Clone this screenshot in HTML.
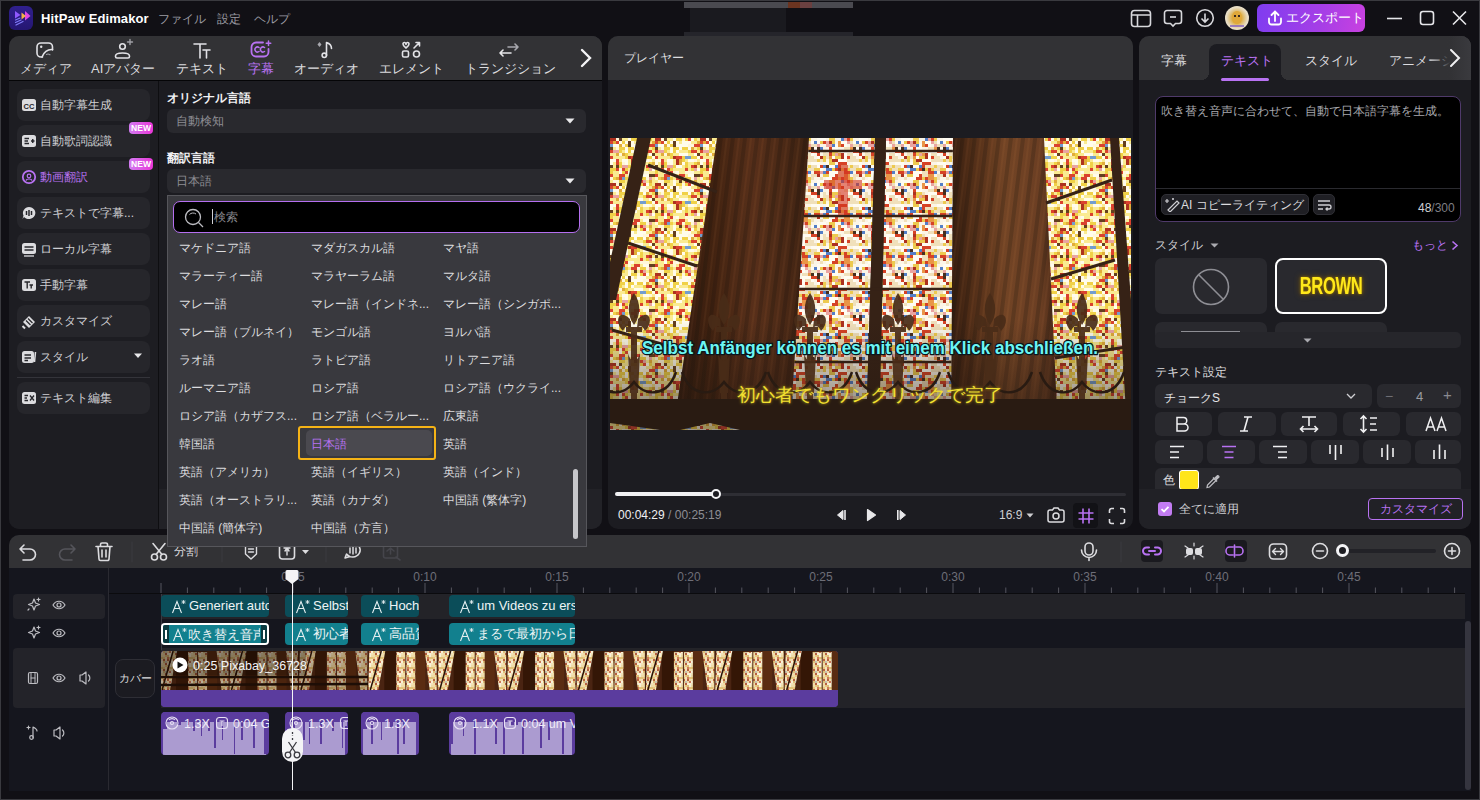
<!DOCTYPE html>
<html><head><meta charset="utf-8">
<style>
*{box-sizing:border-box;margin:0;padding:0}
html,body{width:1480px;height:800px;overflow:hidden;background:#111015;font-family:"Liberation Sans",sans-serif;color:#e6e6e8}
.a{position:absolute}
.win{left:0;top:0;width:1480px;height:800px;border:1px solid #3a3a3f}
.panel{background:#1c1c21;border-radius:10px;overflow:hidden}
.hdr{background:#323235}
.t{white-space:nowrap}
.clip{border-radius:4px;overflow:hidden}
.ci{position:absolute;left:10px;top:4px}
.ct{position:absolute;left:28px;top:3px;font-size:13px;line-height:15px;color:#eef4f5;white-space:nowrap;overflow:hidden}
.bt{height:24px;border-radius:6px;background:#29292e}
.pop{z-index:5}
.dd{left:167px;width:419px;height:24px;border-radius:6px;background:#29292e}
.lg{font-size:12px;line-height:16px}
.tab{font-size:13px;color:#dcdcdf;line-height:15px}
.si{left:17px;width:133px;height:32px;border-radius:8px;background:#26262b}
.st{left:40px;font-size:12px;color:#cfcfd3;line-height:16px}
.new{left:129px;width:24px;height:12px;border-radius:4px;background:linear-gradient(90deg,#d27cf2,#ea36d8);color:#fff;font-size:8.5px;font-weight:bold;line-height:12px;text-align:center}
</style></head>
<body>
<div class="a win"></div>
<!-- top bar -->
<div class="a" style="left:9px;top:6px;width:24px;height:24px;border-radius:6px;background:linear-gradient(180deg,#30208e,#251672)"></div>
<svg class="a" style="left:9px;top:6px" width="24" height="24" viewBox="0 0 24 24">
 <path d="M6 5 L11.5 9 L6 12.5Z" fill="#8f58ff"/>
 <path d="M16 5 L21.5 10 L16 14.5Z" fill="#e046e6"/>
 <path d="M12.5 6.5 L17 10 L12.5 13.5Z" fill="#f2b446"/>
 <path d="M6.5 14 L11 12 M6.5 16.5 L12 14 M7 19 L14 15.5" stroke="#7f7af8" stroke-width="1.2" stroke-linecap="round"/>
</svg>
<div class="a t" style="left:41px;top:11px;font-size:13px;font-weight:bold;color:#fff;letter-spacing:0.1px">HitPaw Edimakor</div>
<div class="a t" style="left:158px;top:11px;font-size:12px;color:#9c9ca3">ファイル</div>
<div class="a t" style="left:217px;top:11px;font-size:12px;color:#9c9ca3">設定</div>
<div class="a t" style="left:254px;top:11px;font-size:12px;color:#9c9ca3">ヘルプ</div>
<!-- blurred title -->
<div class="a" style="left:684px;top:2px;width:169px;height:6px;background:#4a4a50"></div>
<div class="a" style="left:788px;top:2px;width:12px;height:6px;background:#6b3420"></div>
<div class="a" style="left:800px;top:2px;width:12px;height:6px;background:#6a4040"></div>
<div class="a" style="left:690px;top:8px;width:96px;height:24px;background:#1a1a1f"></div>
<div class="a" style="left:684px;top:32px;width:169px;height:4px;background:#25252b"></div>
<!-- right icons -->
<svg class="a" style="left:1130px;top:9px" width="22" height="19" viewBox="0 0 22 19" fill="none" stroke="#d8d8dc" stroke-width="1.6">
 <rect x="1.5" y="1.5" width="19" height="16" rx="3"/><path d="M1.5 6 H20.5 M7.5 6 V17.5"/>
</svg>
<svg class="a" style="left:1163px;top:9px" width="20" height="20" viewBox="0 0 20 20" fill="none" stroke="#d8d8dc" stroke-width="1.6">
 <path d="M4 1.5 H16 A2.5 2.5 0 0 1 18.5 4 V12 A2.5 2.5 0 0 1 16 14.5 H12.5 L10 17 L7.5 14.5 H4 A2.5 2.5 0 0 1 1.5 12 V4 A2.5 2.5 0 0 1 4 1.5Z"/><path d="M7 8 H13"/>
</svg>
<svg class="a" style="left:1195px;top:8px" width="20" height="20" viewBox="0 0 20 20" fill="none" stroke="#d8d8dc" stroke-width="1.6">
 <circle cx="10" cy="10" r="8.3"/><path d="M10 5.5 V14 M6.5 10.5 L10 14 L13.5 10.5"/>
</svg>
<div class="a" style="left:1225px;top:6px;width:24px;height:24px;border-radius:50%;background:radial-gradient(circle at 50% 50%,#e6b44a 0,#dcae48 30%,#e8dcc4 62%,#f2ead8 100%);overflow:hidden"><div class="a" style="left:7px;top:5px;width:10px;height:13px;border-radius:45%;background:#e0a83a"></div><div class="a" style="left:9px;top:9px;width:2px;height:2px;background:#3a2a20"></div><div class="a" style="left:13px;top:9px;width:2px;height:2px;background:#3a2a20"></div><div class="a" style="left:5px;top:19px;width:14px;height:2px;background:#7a58c8;opacity:.7"></div></div>
<div class="a" style="left:1257px;top:4px;width:108px;height:28px;border-radius:6px;background:linear-gradient(100deg,#7f3df0 0%,#a63ee6 60%,#c941e0 100%)"></div>
<svg class="a" style="left:1266px;top:9px" width="18" height="18" viewBox="0 0 18 18" fill="none" stroke="#fff" stroke-width="1.8" stroke-linecap="round">
 <path d="M9 12 V2.5 M5.5 6 L9 2.5 L12.5 6"/><path d="M3 9.5 V13 A2.5 2.5 0 0 0 5.5 15.5 H12.5 A2.5 2.5 0 0 0 15 13 V9.5"/>
</svg>
<div class="a t" style="left:1286px;top:10px;font-size:12.5px;color:#fff">エクスポート</div>
<svg class="a" style="left:1380px;top:8px" width="92" height="20" viewBox="0 0 92 20" fill="none" stroke="#e6e6ea" stroke-width="1.6">
 <path d="M7 10.5 H22"/><rect x="40.5" y="3.5" width="13" height="13" rx="2.5"/><path d="M73 3.5 L86 16.5 M86 3.5 L73 16.5"/>
</svg>

<!-- left panel -->
<div class="a panel" style="left:9px;top:36px;width:593px;height:493px">
  <div class="a hdr" style="left:0;top:0;width:593px;height:44px"></div>
  <div class="a" style="left:0;top:44px;width:593px;height:1px;background:#050507"></div>
  <div class="a" style="left:0;top:45px;width:149px;height:448px;background:#1d1d22"></div>
  <div class="a" style="left:149px;top:45px;width:1px;height:448px;background:#0e0e11"></div>
  <div class="a" style="left:150px;top:453px;width:443px;height:40px;background:#222227"></div>
</div>
<!-- toolbar tabs -->
<div class="a t tab" style="left:20px;top:61px">メディア</div>
<div class="a t tab" style="left:91px;top:61px">AIアバター</div>
<div class="a t tab" style="left:176px;top:61px">テキスト</div>
<div class="a t tab" style="left:248px;top:61px;color:#b872f2">字幕</div>
<div class="a t tab" style="left:294px;top:61px">オーディオ</div>
<div class="a t tab" style="left:379px;top:61px">エレメント</div>
<div class="a t tab" style="left:465px;top:61px">トランジション</div>
<div class="a" style="left:560px;top:36px;width:42px;height:44px;background:linear-gradient(90deg,rgba(50,50,53,0),#323235 45%);border-top-right-radius:10px"></div>
<svg class="a" style="left:578px;top:48px" width="16" height="20" viewBox="0 0 16 20" fill="none" stroke="#f4f4f6" stroke-width="2.4" stroke-linecap="round"><path d="M4 2 L12 10 L4 18"/></svg>
<svg class="a" style="left:0;top:37px" width="600" height="30" fill="none" stroke="#e2e2e6" stroke-width="1.6" stroke-linecap="round" stroke-linejoin="round">
 <!-- media -->
 <path d="M52.5 13 V10 A4 4 0 0 0 48.5 6 H41 A4 4 0 0 0 37 10 V16 A4 4 0 0 0 41 20 H42.5"/><circle cx="41.2" cy="9.8" r="1.2" fill="#e2e2e6" stroke="none"/>
 <path d="M42 20 C43.5 15.5 47.5 12 52.5 12.5"/><path d="M46.5 17.5 C47.5 16.8 48.8 17 50 17.8" stroke-width="1.1" stroke="#9a9aa0"/>
 <!-- avatar -->
 <circle cx="122.5" cy="9.5" r="2.8"/><path d="M115.5 19 C115.5 15 129.5 15 129.5 19 V19.5 A1.5 1.5 0 0 1 128 21 H117 A1.5 1.5 0 0 1 115.5 19.5Z"/><path d="M130 2.5 V7.5 M127.5 5 H132.5" stroke-width="1.4" stroke="#a0a0a6"/>
 <!-- text -->
 <path d="M194 7 H206 M200 7 V21 M203 13 H210 M206.5 13 V21"/>
 <!-- element -->
 <path d="M403 7 C403 5 406 5 406 7.5 C406 5 409 5 409 7 C409 9 406 11 406 11 C406 11 403 9 403 7Z"/><rect x="402.5" y="14" width="6" height="6" rx="1.5"/><circle cx="416.5" cy="17" r="3"/><path d="M414 11 L419.5 5.5 M416 5.5 H419.5 V9"/>
 <!-- transition -->
 <path d="M508 10 H518 M515 7 L518 10 L515 13" stroke="#a8a8ae"/><path d="M500 16 H511 M503 13 L500 16 L503 19" stroke="#e8e8ea"/>
 <!-- audio -->
 <path d="M326.5 18.5 V5.5 C329.5 6.5 331.5 8.5 331.5 11.5"/><circle cx="324.3" cy="18.3" r="2.2"/><path d="M319.5 5 L321.5 7.5 L319.5 10 L317.5 7.5Z" fill="#a8a8ae" stroke="none"/>
</svg>
<svg class="a" style="left:249px;top:39px" width="24" height="20" fill="none" stroke="#b872f2" stroke-width="1.8" stroke-linecap="round">
 <path d="M14 3.5 H7 A4.5 4.5 0 0 0 2.5 8 V13 A4.5 4.5 0 0 0 7 17.5 H15 A4.5 4.5 0 0 0 19.5 13 V10"/>
 <path d="M10 8.5 A2.5 2.5 0 1 0 10 12.5 M15.5 8.5 A2.5 2.5 0 1 0 15.5 12.5" stroke-width="1.5"/>
 <path d="M19.5 2 V6.5 M17.25 4.25 H21.75" stroke-width="1.5"/>
</svg>
<!-- sidebar items -->
<div class="a si" style="top:89px"></div>
<div class="a si" style="top:125px"></div>
<div class="a si" style="top:161px"></div>
<div class="a si" style="top:197px"></div>
<div class="a si" style="top:233px"></div>
<div class="a si" style="top:269px"></div>
<div class="a si" style="top:305px"></div>
<div class="a si" style="top:341px"></div>
<div class="a" style="left:17px;top:377px;width:133px;height:1px;background:#34343a"></div>
<div class="a si" style="top:382px"></div>
<div class="a t st" style="top:97px">自動字幕生成</div>
<div class="a t st" style="top:133px">自動歌詞認識</div>
<div class="a t st" style="top:169px;color:#b872f2">動画翻訳</div>
<div class="a t st" style="top:205px">テキストで字幕...</div>
<div class="a t st" style="top:241px">ローカル字幕</div>
<div class="a t st" style="top:277px">手動字幕</div>
<div class="a t st" style="top:313px">カスタマイズ</div>
<div class="a t st" style="top:349px">スタイル</div>
<div class="a t st" style="top:390px">テキスト編集</div>
<div class="a new" style="top:122px">NEW</div>
<div class="a new" style="top:158px">NEW</div>
<svg class="a" style="left:133px;top:353px" width="10" height="6"><path d="M1 0.5 H9 L5 5Z" fill="#e8e8ea"/></svg>
<svg class="a" style="left:21px;top:98px" width="16" height="330">
 <rect x="1" y="1" width="14" height="12" rx="2.5" fill="#dcdcdf"/><text x="8" y="10.5" font-size="7.5" font-weight="bold" text-anchor="middle" fill="#26262b" font-family="Liberation Sans">CC</text>
 <g transform="translate(0,36)"><rect x="1" y="1" width="14" height="12" rx="2.5" fill="#dcdcdf"/><path d="M3.5 4.5 H8 M3.5 7 H7 M3.5 9.5 H8 M10 7 H13.5 M11.75 5 V9" stroke="#26262b" stroke-width="1.4"/></g>
 <g transform="translate(0,72)"><circle cx="8" cy="7" r="6.2" fill="none" stroke="#b872f2" stroke-width="1.8"/><circle cx="8" cy="6" r="1.8" fill="none" stroke="#b872f2" stroke-width="1.2"/><path d="M5 10.5 C5.5 8.5 10.5 8.5 11 10.5" fill="none" stroke="#b872f2" stroke-width="1.2"/></g>
 <g transform="translate(0,108)"><path d="M8 1 A6.5 6 0 1 1 3 11 L1.5 13 L2.5 9.5 A6.5 6 0 0 1 8 1Z" fill="#dcdcdf"/><path d="M5.5 5 V9 M8 4 V10 M10.5 5 V9" stroke="#26262b" stroke-width="1.5"/></g>
 <g transform="translate(0,144)"><rect x="1" y="1" width="14" height="11" rx="2.5" fill="#dcdcdf"/><path d="M3.5 5 H12.5 M3.5 8 H12.5" stroke="#26262b" stroke-width="1.3"/><path d="M3 14 H13" stroke="#dcdcdf" stroke-width="1.3"/></g>
 <g transform="translate(0,180)"><rect x="1" y="1" width="14" height="12" rx="2.5" fill="#dcdcdf"/><path d="M3.5 4 H9 M6.2 4 V10.5 M8.5 7 H12 M10.2 7 V10.5" stroke="#26262b" stroke-width="1.4"/></g>
 <g transform="translate(0,216)"><path d="M2 8 L8 2 L14 8 L8 14Z" fill="#dcdcdf"/><path d="M5 6.5 L9.5 11 M7 4.5 L11.5 9" stroke="#26262b" stroke-width="1.2"/><path d="M1.5 12 L4 14.5" stroke="#dcdcdf" stroke-width="2"/></g>
 <g transform="translate(0,252)"><rect x="1" y="1" width="12" height="12" rx="2.5" fill="#dcdcdf"/><path d="M3.5 5 H10 M3.5 8 H10 M3.5 10.5 H7" stroke="#26262b" stroke-width="1.3"/><path d="M14.5 2 L13.5 12" stroke="#dcdcdf" stroke-width="1.5"/></g>
 <g transform="translate(0,293)"><rect x="1" y="1" width="14" height="12" rx="2.5" fill="#dcdcdf"/><path d="M3.5 4.5 H7 M3.5 7 H6 M3.5 9.5 H7 M9 4.5 L13 9.5 M13 4.5 L9 9.5" stroke="#26262b" stroke-width="1.3"/></g>
</svg>

<!-- content -->
<div class="a t" style="left:167px;top:90px;font-size:12px;font-weight:bold;color:#f2f2f4;line-height:16px">オリジナル言語</div>
<div class="a dd" style="top:109px"></div>
<div class="a t" style="left:176px;top:113px;font-size:12px;color:#8e8e94;line-height:16px">自動検知</div>
<svg class="a" style="left:565px;top:118px" width="10" height="6"><path d="M0.5 0.5 H9.5 L5 5.5Z" fill="#e8e8ea"/></svg>
<div class="a t" style="left:167px;top:150px;font-size:12px;font-weight:bold;color:#f2f2f4;line-height:16px">翻訳言語</div>
<div class="a dd" style="top:169px"></div>
<div class="a t" style="left:176px;top:173px;font-size:12px;color:#8e8e94;line-height:16px">日本語</div>
<svg class="a" style="left:565px;top:178px" width="10" height="6"><path d="M0.5 0.5 H9.5 L5 5.5Z" fill="#e8e8ea"/></svg>
<!-- player panel -->
<div class="a panel" style="left:608px;top:36px;width:525px;height:493px">
  <div class="a hdr" style="left:0;top:0;width:525px;height:44px"></div>
</div>
<div class="a t" style="left:624px;top:50px;font-size:12px;color:#dcdcdf;line-height:16px">プレイヤー</div>
<div id="video" class="a" style="left:610px;top:138px;width:521px;height:292px;background:#2a1810;overflow:hidden"><svg width="521" height="292" viewBox="0 0 521 292"><defs><pattern id="g1" width="42" height="42" patternUnits="userSpaceOnUse"><rect width="42" height="42" fill="#fbf6ea"/><rect x="0" y="0" width="3" height="6" fill="#fffdf6"/><rect x="3" y="0" width="3" height="3" fill="#fffdf6"/><rect x="9" y="0" width="6" height="6" fill="#ecc848"/><rect x="21" y="0" width="6" height="3" fill="#4a78c8"/><rect x="24" y="0" width="6" height="6" fill="#e8a0a0"/><rect x="27" y="0" width="3" height="3" fill="#d4381e"/><rect x="30" y="0" width="3" height="3" fill="#ecc848"/><rect x="39" y="0" width="3" height="6" fill="#fffdf6"/><rect x="0" y="3" width="6" height="3" fill="#ecc848"/><rect x="3" y="3" width="3" height="3" fill="#d4381e"/><rect x="6" y="3" width="6" height="6" fill="#e8a0a0"/><rect x="9" y="3" width="3" height="3" fill="#a82818"/><rect x="18" y="3" width="3" height="6" fill="#e89040"/><rect x="21" y="3" width="6" height="6" fill="#fffdf6"/><rect x="30" y="3" width="3" height="6" fill="#f0e0bc"/><rect x="33" y="3" width="3" height="6" fill="#fffdf6"/><rect x="36" y="3" width="3" height="3" fill="#4a78c8"/><rect x="39" y="3" width="6" height="6" fill="#fffdf6"/><rect x="12" y="6" width="3" height="3" fill="#4a78c8"/><rect x="15" y="6" width="3" height="6" fill="#fffdf6"/><rect x="21" y="6" width="3" height="3" fill="#d4381e"/><rect x="30" y="6" width="6" height="3" fill="#e8a0a0"/><rect x="33" y="6" width="3" height="3" fill="#f0e0bc"/><rect x="36" y="6" width="6" height="3" fill="#f0e0bc"/><rect x="39" y="6" width="3" height="3" fill="#e8a0a0"/><rect x="0" y="9" width="3" height="3" fill="#4a78c8"/><rect x="9" y="9" width="3" height="6" fill="#d4381e"/><rect x="12" y="9" width="3" height="6" fill="#fffdf6"/><rect x="15" y="9" width="3" height="6" fill="#fffdf6"/><rect x="24" y="9" width="6" height="3" fill="#f0e0bc"/><rect x="30" y="9" width="6" height="3" fill="#e89040"/><rect x="33" y="9" width="6" height="6" fill="#3a2418"/><rect x="36" y="9" width="3" height="3" fill="#fffdf6"/><rect x="39" y="9" width="3" height="6" fill="#3a2418"/><rect x="3" y="12" width="3" height="3" fill="#f0e0bc"/><rect x="9" y="12" width="3" height="3" fill="#a82818"/><rect x="12" y="12" width="6" height="6" fill="#ecc848"/><rect x="18" y="12" width="3" height="3" fill="#f0e0bc"/><rect x="24" y="12" width="3" height="3" fill="#fffdf6"/><rect x="27" y="12" width="3" height="3" fill="#fffdf6"/><rect x="30" y="12" width="6" height="6" fill="#fffdf6"/><rect x="33" y="12" width="6" height="3" fill="#d4381e"/><rect x="3" y="15" width="6" height="6" fill="#f0e0bc"/><rect x="9" y="15" width="3" height="6" fill="#d4381e"/><rect x="15" y="15" width="3" height="3" fill="#e8a0a0"/><rect x="18" y="15" width="6" height="6" fill="#e89040"/><rect x="21" y="15" width="6" height="6" fill="#a82818"/><rect x="24" y="15" width="6" height="6" fill="#fffdf6"/><rect x="27" y="15" width="3" height="6" fill="#f0e0bc"/><rect x="30" y="15" width="3" height="6" fill="#f0e0bc"/><rect x="33" y="15" width="3" height="6" fill="#fffdf6"/><rect x="39" y="15" width="6" height="6" fill="#d4381e"/><rect x="0" y="18" width="3" height="6" fill="#a82818"/><rect x="3" y="18" width="3" height="6" fill="#ecc848"/><rect x="9" y="18" width="3" height="6" fill="#e89040"/><rect x="12" y="18" width="3" height="6" fill="#fffdf6"/><rect x="15" y="18" width="6" height="6" fill="#ecc848"/><rect x="27" y="18" width="3" height="3" fill="#d4381e"/><rect x="30" y="18" width="6" height="3" fill="#f0e0bc"/><rect x="33" y="18" width="3" height="6" fill="#f0e0bc"/><rect x="39" y="18" width="6" height="6" fill="#fffdf6"/><rect x="0" y="21" width="3" height="3" fill="#f0e0bc"/><rect x="9" y="21" width="6" height="6" fill="#ecc848"/><rect x="12" y="21" width="6" height="3" fill="#a82818"/><rect x="18" y="21" width="3" height="3" fill="#fffdf6"/><rect x="21" y="21" width="6" height="3" fill="#fffdf6"/><rect x="27" y="21" width="6" height="3" fill="#f0e0bc"/><rect x="36" y="21" width="3" height="6" fill="#f0e0bc"/><rect x="39" y="21" width="3" height="6" fill="#ecc848"/><rect x="6" y="24" width="3" height="6" fill="#fffdf6"/><rect x="18" y="24" width="3" height="6" fill="#d4381e"/><rect x="21" y="24" width="6" height="6" fill="#d4381e"/><rect x="24" y="24" width="3" height="3" fill="#d4381e"/><rect x="33" y="24" width="6" height="3" fill="#fffdf6"/><rect x="39" y="24" width="6" height="3" fill="#fffdf6"/><rect x="0" y="27" width="6" height="3" fill="#d4381e"/><rect x="3" y="27" width="6" height="3" fill="#4a78c8"/><rect x="6" y="27" width="6" height="3" fill="#3a2418"/><rect x="9" y="27" width="6" height="6" fill="#fffdf6"/><rect x="12" y="27" width="3" height="6" fill="#fffdf6"/><rect x="15" y="27" width="6" height="3" fill="#4a78c8"/><rect x="18" y="27" width="3" height="6" fill="#d4381e"/><rect x="21" y="27" width="6" height="6" fill="#f0e0bc"/><rect x="27" y="27" width="6" height="6" fill="#f0e0bc"/><rect x="30" y="27" width="6" height="3" fill="#ecc848"/><rect x="33" y="27" width="6" height="3" fill="#f0e0bc"/><rect x="39" y="27" width="3" height="6" fill="#fffdf6"/><rect x="0" y="30" width="3" height="6" fill="#fffdf6"/><rect x="6" y="30" width="3" height="3" fill="#4a78c8"/><rect x="9" y="30" width="3" height="3" fill="#4a78c8"/><rect x="12" y="30" width="6" height="6" fill="#ecc848"/><rect x="15" y="30" width="6" height="3" fill="#d4381e"/><rect x="18" y="30" width="3" height="3" fill="#3a2418"/><rect x="21" y="30" width="3" height="6" fill="#ecc848"/><rect x="24" y="30" width="3" height="6" fill="#d4381e"/><rect x="27" y="30" width="3" height="3" fill="#ecc848"/><rect x="30" y="30" width="6" height="3" fill="#f0e0bc"/><rect x="33" y="30" width="6" height="3" fill="#f0e0bc"/><rect x="36" y="30" width="3" height="3" fill="#ecc848"/><rect x="39" y="30" width="6" height="3" fill="#ecc848"/><rect x="0" y="33" width="3" height="3" fill="#e8a0a0"/><rect x="3" y="33" width="3" height="3" fill="#4a78c8"/><rect x="6" y="33" width="3" height="3" fill="#d4381e"/><rect x="9" y="33" width="6" height="6" fill="#fffdf6"/><rect x="15" y="33" width="3" height="3" fill="#fffdf6"/><rect x="18" y="33" width="6" height="3" fill="#f0e0bc"/><rect x="27" y="33" width="6" height="3" fill="#d4381e"/><rect x="30" y="33" width="3" height="3" fill="#4a78c8"/><rect x="36" y="33" width="3" height="3" fill="#d4381e"/><rect x="39" y="33" width="3" height="6" fill="#d4381e"/><rect x="3" y="36" width="3" height="3" fill="#ecc848"/><rect x="6" y="36" width="3" height="3" fill="#ecc848"/><rect x="9" y="36" width="3" height="3" fill="#fffdf6"/><rect x="15" y="36" width="6" height="3" fill="#d4381e"/><rect x="18" y="36" width="6" height="6" fill="#f0e0bc"/><rect x="24" y="36" width="6" height="6" fill="#e89040"/><rect x="33" y="36" width="3" height="6" fill="#f0e0bc"/><rect x="36" y="36" width="3" height="3" fill="#f0e0bc"/><rect x="39" y="36" width="3" height="3" fill="#a82818"/><rect x="0" y="39" width="3" height="6" fill="#f0e0bc"/><rect x="6" y="39" width="6" height="3" fill="#fffdf6"/><rect x="12" y="39" width="6" height="6" fill="#d4381e"/><rect x="18" y="39" width="6" height="3" fill="#ecc848"/><rect x="21" y="39" width="3" height="3" fill="#d4381e"/><rect x="30" y="39" width="3" height="3" fill="#ecc848"/></pattern><pattern id="g2" width="45" height="45" patternUnits="userSpaceOnUse"><rect width="45" height="45" fill="#fff8dc"/><rect x="0" y="0" width="6" height="6" fill="#a82818"/><rect x="9" y="0" width="3" height="6" fill="#5a3418"/><rect x="12" y="0" width="3" height="3" fill="#faeb90"/><rect x="15" y="0" width="6" height="3" fill="#faeb90"/><rect x="18" y="0" width="6" height="3" fill="#fffdf0"/><rect x="21" y="0" width="6" height="3" fill="#f0d040"/><rect x="30" y="0" width="3" height="6" fill="#f0d040"/><rect x="33" y="0" width="6" height="6" fill="#d83828"/><rect x="36" y="0" width="3" height="3" fill="#fffdf0"/><rect x="39" y="0" width="6" height="6" fill="#f0d040"/><rect x="42" y="0" width="6" height="6" fill="#faeb90"/><rect x="0" y="3" width="6" height="3" fill="#d83828"/><rect x="3" y="3" width="6" height="6" fill="#e0a830"/><rect x="6" y="3" width="6" height="3" fill="#d83828"/><rect x="9" y="3" width="3" height="3" fill="#fffdf0"/><rect x="12" y="3" width="3" height="3" fill="#f0d040"/><rect x="15" y="3" width="6" height="3" fill="#fffdf0"/><rect x="18" y="3" width="6" height="3" fill="#5a3418"/><rect x="21" y="3" width="3" height="3" fill="#fffdf0"/><rect x="24" y="3" width="6" height="6" fill="#faeb90"/><rect x="27" y="3" width="6" height="6" fill="#fffdf0"/><rect x="33" y="3" width="6" height="3" fill="#fffdf0"/><rect x="36" y="3" width="3" height="3" fill="#faeb90"/><rect x="39" y="3" width="3" height="3" fill="#faeb90"/><rect x="42" y="3" width="3" height="3" fill="#e0a830"/><rect x="0" y="6" width="3" height="6" fill="#6a98d0"/><rect x="3" y="6" width="6" height="3" fill="#fffdf0"/><rect x="6" y="6" width="6" height="3" fill="#fffdf0"/><rect x="9" y="6" width="3" height="3" fill="#e0a830"/><rect x="15" y="6" width="6" height="3" fill="#f0d040"/><rect x="18" y="6" width="3" height="3" fill="#5a3418"/><rect x="21" y="6" width="3" height="3" fill="#fffdf0"/><rect x="24" y="6" width="3" height="3" fill="#fffdf0"/><rect x="27" y="6" width="3" height="3" fill="#fffdf0"/><rect x="39" y="6" width="3" height="6" fill="#d83828"/><rect x="42" y="6" width="3" height="6" fill="#d83828"/><rect x="0" y="9" width="3" height="6" fill="#5a3418"/><rect x="3" y="9" width="3" height="6" fill="#faeb90"/><rect x="9" y="9" width="6" height="6" fill="#f0d040"/><rect x="12" y="9" width="6" height="6" fill="#f0d040"/><rect x="15" y="9" width="3" height="6" fill="#fffdf0"/><rect x="18" y="9" width="3" height="3" fill="#f0d040"/><rect x="21" y="9" width="3" height="3" fill="#f0d040"/><rect x="24" y="9" width="3" height="3" fill="#fffdf0"/><rect x="27" y="9" width="3" height="6" fill="#f0d040"/><rect x="30" y="9" width="6" height="6" fill="#f0d040"/><rect x="33" y="9" width="3" height="3" fill="#fffdf0"/><rect x="36" y="9" width="6" height="6" fill="#e0a830"/><rect x="39" y="9" width="3" height="6" fill="#faeb90"/><rect x="42" y="9" width="3" height="6" fill="#f0d040"/><rect x="0" y="12" width="3" height="3" fill="#d83828"/><rect x="3" y="12" width="6" height="6" fill="#e8a0a0"/><rect x="12" y="12" width="3" height="6" fill="#faeb90"/><rect x="18" y="12" width="3" height="3" fill="#f0d040"/><rect x="21" y="12" width="3" height="6" fill="#fffdf0"/><rect x="24" y="12" width="3" height="3" fill="#faeb90"/><rect x="27" y="12" width="6" height="6" fill="#faeb90"/><rect x="36" y="12" width="6" height="6" fill="#d83828"/><rect x="42" y="12" width="3" height="6" fill="#faeb90"/><rect x="0" y="15" width="6" height="6" fill="#faeb90"/><rect x="3" y="15" width="3" height="6" fill="#faeb90"/><rect x="6" y="15" width="3" height="3" fill="#e0a830"/><rect x="12" y="15" width="3" height="3" fill="#e0a830"/><rect x="15" y="15" width="3" height="6" fill="#f0d040"/><rect x="18" y="15" width="6" height="3" fill="#faeb90"/><rect x="24" y="15" width="3" height="3" fill="#fffdf0"/><rect x="27" y="15" width="6" height="3" fill="#fffdf0"/><rect x="33" y="15" width="6" height="3" fill="#faeb90"/><rect x="39" y="15" width="3" height="6" fill="#fffdf0"/><rect x="42" y="15" width="6" height="3" fill="#5a3418"/><rect x="0" y="18" width="3" height="3" fill="#d83828"/><rect x="3" y="18" width="6" height="6" fill="#faeb90"/><rect x="9" y="18" width="3" height="3" fill="#faeb90"/><rect x="12" y="18" width="3" height="3" fill="#faeb90"/><rect x="15" y="18" width="6" height="3" fill="#f0d040"/><rect x="18" y="18" width="3" height="3" fill="#a82818"/><rect x="21" y="18" width="6" height="3" fill="#d83828"/><rect x="27" y="18" width="3" height="3" fill="#f0d040"/><rect x="30" y="18" width="6" height="6" fill="#6a98d0"/><rect x="36" y="18" width="6" height="3" fill="#f0d040"/><rect x="42" y="18" width="6" height="3" fill="#fffdf0"/><rect x="0" y="21" width="3" height="6" fill="#fffdf0"/><rect x="3" y="21" width="3" height="3" fill="#fffdf0"/><rect x="6" y="21" width="3" height="6" fill="#d83828"/><rect x="9" y="21" width="3" height="6" fill="#faeb90"/><rect x="12" y="21" width="3" height="3" fill="#fffdf0"/><rect x="15" y="21" width="6" height="6" fill="#fffdf0"/><rect x="18" y="21" width="6" height="6" fill="#faeb90"/><rect x="21" y="21" width="6" height="6" fill="#a82818"/><rect x="24" y="21" width="6" height="6" fill="#e0a830"/><rect x="27" y="21" width="6" height="6" fill="#f0d040"/><rect x="30" y="21" width="3" height="3" fill="#faeb90"/><rect x="33" y="21" width="6" height="3" fill="#fffdf0"/><rect x="42" y="21" width="3" height="6" fill="#faeb90"/><rect x="3" y="24" width="3" height="6" fill="#faeb90"/><rect x="6" y="24" width="3" height="3" fill="#d83828"/><rect x="9" y="24" width="3" height="6" fill="#f0d040"/><rect x="27" y="24" width="3" height="3" fill="#fffdf0"/><rect x="33" y="24" width="3" height="6" fill="#faeb90"/><rect x="36" y="24" width="3" height="6" fill="#faeb90"/><rect x="39" y="24" width="3" height="6" fill="#f0d040"/><rect x="42" y="24" width="3" height="3" fill="#e0a830"/><rect x="0" y="27" width="3" height="3" fill="#5a3418"/><rect x="6" y="27" width="6" height="3" fill="#5a3418"/><rect x="9" y="27" width="3" height="3" fill="#f0d040"/><rect x="12" y="27" width="6" height="3" fill="#e8a0a0"/><rect x="18" y="27" width="3" height="6" fill="#f0d040"/><rect x="21" y="27" width="6" height="3" fill="#fffdf0"/><rect x="27" y="27" width="3" height="6" fill="#faeb90"/><rect x="30" y="27" width="6" height="6" fill="#f0d040"/><rect x="33" y="27" width="3" height="3" fill="#faeb90"/><rect x="36" y="27" width="3" height="6" fill="#d83828"/><rect x="39" y="27" width="6" height="3" fill="#a82818"/><rect x="42" y="27" width="6" height="3" fill="#faeb90"/><rect x="0" y="30" width="3" height="6" fill="#f0d040"/><rect x="3" y="30" width="6" height="3" fill="#f0d040"/><rect x="6" y="30" width="3" height="6" fill="#d83828"/><rect x="12" y="30" width="3" height="3" fill="#d83828"/><rect x="15" y="30" width="3" height="6" fill="#f0d040"/><rect x="18" y="30" width="3" height="3" fill="#faeb90"/><rect x="21" y="30" width="3" height="6" fill="#faeb90"/><rect x="24" y="30" width="6" height="3" fill="#faeb90"/><rect x="27" y="30" width="3" height="6" fill="#faeb90"/><rect x="30" y="30" width="6" height="3" fill="#d83828"/><rect x="33" y="30" width="6" height="3" fill="#faeb90"/><rect x="36" y="30" width="3" height="3" fill="#f0d040"/><rect x="39" y="30" width="6" height="3" fill="#e8a0a0"/><rect x="42" y="30" width="3" height="3" fill="#fffdf0"/><rect x="0" y="33" width="3" height="3" fill="#f0d040"/><rect x="3" y="33" width="6" height="3" fill="#faeb90"/><rect x="9" y="33" width="3" height="6" fill="#fffdf0"/><rect x="12" y="33" width="6" height="3" fill="#f0d040"/><rect x="15" y="33" width="3" height="3" fill="#d83828"/><rect x="21" y="33" width="6" height="3" fill="#fffdf0"/><rect x="24" y="33" width="6" height="3" fill="#faeb90"/><rect x="39" y="33" width="3" height="6" fill="#faeb90"/><rect x="42" y="33" width="3" height="6" fill="#faeb90"/><rect x="0" y="36" width="6" height="3" fill="#d83828"/><rect x="3" y="36" width="3" height="3" fill="#faeb90"/><rect x="6" y="36" width="6" height="6" fill="#faeb90"/><rect x="9" y="36" width="6" height="6" fill="#d83828"/><rect x="15" y="36" width="3" height="6" fill="#faeb90"/><rect x="21" y="36" width="3" height="6" fill="#faeb90"/><rect x="24" y="36" width="6" height="3" fill="#d83828"/><rect x="27" y="36" width="6" height="3" fill="#d83828"/><rect x="30" y="36" width="3" height="3" fill="#faeb90"/><rect x="33" y="36" width="6" height="3" fill="#fffdf0"/><rect x="36" y="36" width="6" height="3" fill="#fffdf0"/><rect x="39" y="36" width="6" height="3" fill="#5a3418"/><rect x="3" y="39" width="6" height="3" fill="#f0d040"/><rect x="6" y="39" width="3" height="3" fill="#e0a830"/><rect x="12" y="39" width="3" height="6" fill="#6a98d0"/><rect x="15" y="39" width="3" height="3" fill="#f0d040"/><rect x="18" y="39" width="6" height="6" fill="#faeb90"/><rect x="21" y="39" width="6" height="3" fill="#d83828"/><rect x="24" y="39" width="3" height="6" fill="#d83828"/><rect x="30" y="39" width="6" height="3" fill="#f0d040"/><rect x="33" y="39" width="3" height="3" fill="#f0d040"/><rect x="39" y="39" width="6" height="6" fill="#e8a0a0"/><rect x="42" y="39" width="6" height="6" fill="#faeb90"/><rect x="0" y="42" width="3" height="6" fill="#faeb90"/><rect x="9" y="42" width="3" height="3" fill="#f0d040"/><rect x="12" y="42" width="3" height="3" fill="#f0d040"/><rect x="15" y="42" width="3" height="3" fill="#faeb90"/><rect x="18" y="42" width="3" height="6" fill="#fffdf0"/><rect x="24" y="42" width="6" height="3" fill="#5a3418"/><rect x="27" y="42" width="6" height="6" fill="#faeb90"/><rect x="30" y="42" width="6" height="3" fill="#d83828"/><rect x="33" y="42" width="6" height="6" fill="#e8a0a0"/><rect x="36" y="42" width="3" height="3" fill="#faeb90"/><rect x="39" y="42" width="3" height="3" fill="#e0a830"/><rect x="42" y="42" width="6" height="3" fill="#faeb90"/></pattern><linearGradient id="p1" x1="0" x2="1"><stop offset="0" stop-color="#1e0a04"/><stop offset=".3" stop-color="#361606"/><stop offset=".55" stop-color="#4e2410"/><stop offset=".8" stop-color="#3a1a0a"/><stop offset="1" stop-color="#240e04"/></linearGradient>
<linearGradient id="p2" x1="0" x2="1"><stop offset="0" stop-color="#200c04"/><stop offset=".2" stop-color="#44200c"/><stop offset=".5" stop-color="#6a3a1c"/><stop offset=".8" stop-color="#62341a"/><stop offset="1" stop-color="#2a1006"/></linearGradient>
<pattern id="streak" width="12" height="10" patternUnits="userSpaceOnUse" patternTransform="rotate(7)"><rect x="0" width="4" height="10" fill="#000" opacity=".2"/><rect x="7" width="2" height="10" fill="#ff9050" opacity=".06"/></pattern>
<filter id="glow"><feGaussianBlur stdDeviation="1.8"/></filter><filter id="soft"><feGaussianBlur stdDeviation="0.55"/></filter>
</defs><rect width="521" height="292" fill="#3a200f"/><polygon points="80.0,0.0 220.0,0.0 200.0,292.0 50.0,292.0" fill="url(#p1)"/><polygon points="335.0,0.0 445.0,0.0 455.0,292.0 335.0,292.0" fill="url(#p2)"/><polygon points="80.0,0.0 445.0,0.0 455.0,292.0 50.0,292.0" fill="url(#streak)"/><g filter="url(#soft)"><polygon points="0.0,0.0 107.0,0.0 68.0,260.0 66.0,292.0 0.0,292.0" fill="url(#g2)"/><polygon points="199.0,0.0 265.0,0.0 256.0,292.0 180.0,292.0" fill="url(#g1)"/><polygon points="276.0,0.0 343.0,0.0 341.0,292.0 269.0,292.0" fill="url(#g1)"/><polygon points="434.0,0.0 521.0,0.0 521.0,292.0 448.0,292.0" fill="url(#g2)"/></g><polygon points="27.0,0.0 41.0,0.0 6.0,162.0 0.0,162.0 0.0,124.0" fill="#2a160c"/><polygon points="500.0,0.0 509.0,0.0 521.0,162.0 521.0,292.0 517.0,292.0" fill="#2a160c"/><polygon points="265.0,0.0 276.0,0.0 269.0,292.0 256.0,292.0" fill="#2a160c"/><path d="M38 27 L107 54" stroke="#2a160c" stroke-width="3"/><path d="M18 105 L87 128" stroke="#2a160c" stroke-width="3"/><path d="M2 192 L80 214" stroke="#2a160c" stroke-width="3"/><path d="M198.2 13 H342.9" stroke="#2a160c" stroke-width="2.5"/><path d="M193.9 78 H342.5" stroke="#2a160c" stroke-width="2.5"/><path d="M189.2 151 H342.0" stroke="#2a160c" stroke-width="2.5"/><path d="M184.4 224 H341.5" stroke="#2a160c" stroke-width="2.5"/><path d="M436 65 L502 42" stroke="#2a160c" stroke-width="3"/><path d="M441 141 L505 122" stroke="#2a160c" stroke-width="3"/><path d="M445 220 L516 209" stroke="#2a160c" stroke-width="3"/><linearGradient id="fshade" x1="0" y1="0" x2="0" y2="1"><stop offset="0" stop-color="#1a0c06" stop-opacity="0"/><stop offset="1" stop-color="#1a0c06" stop-opacity=".45"/></linearGradient><rect x="0" y="182" width="521" height="80" fill="url(#fshade)"/><path d="M228 27 h10 v15 h14 v9 h-14 v26 h-10 v-26 h-14 v-9 h14z" fill="#d02818" opacity=".6"/><path d="M0 261 H521 V292 H0Z" fill="#1c0e08"/><path d="M0 285 L50 292 H0Z M70 292 L100 285 L130 292Z" fill="url(#g2)" opacity=".55"/><g transform="translate(24,155)" fill="#3e200e" opacity=".92"><path d="M0 0 C-7 10 -7 22 0 32 C7 22 7 10 0 0Z"/><path d="M-4 26 C-16 14 -20 30 -11 38 C-9 33 -6 32 -3 35Z"/><path d="M4 26 C16 14 20 30 11 38 C9 33 6 32 3 35Z"/><rect x="-8" y="34" width="16" height="5"/><rect x="-3" y="38" width="6" height="68"/><path d="M-6 60 C-4 70 4 70 6 60 L4 100 H-4Z"/></g><path d="M-18 234 C-10 258 12 260 24 244 C36 260 58 258 66 234" fill="none" stroke="#1c0e08" stroke-width="2.5"/><g transform="translate(114,155)" fill="#3e200e" opacity=".92"><path d="M0 0 C-7 10 -7 22 0 32 C7 22 7 10 0 0Z"/><path d="M-4 26 C-16 14 -20 30 -11 38 C-9 33 -6 32 -3 35Z"/><path d="M4 26 C16 14 20 30 11 38 C9 33 6 32 3 35Z"/><rect x="-8" y="34" width="16" height="5"/><rect x="-3" y="38" width="6" height="68"/><path d="M-6 60 C-4 70 4 70 6 60 L4 100 H-4Z"/></g><path d="M72 234 C80 258 102 260 114 244 C126 260 148 258 156 234" fill="none" stroke="#1c0e08" stroke-width="2.5"/><g transform="translate(200,155)" fill="#3e200e" opacity=".92"><path d="M0 0 C-7 10 -7 22 0 32 C7 22 7 10 0 0Z"/><path d="M-4 26 C-16 14 -20 30 -11 38 C-9 33 -6 32 -3 35Z"/><path d="M4 26 C16 14 20 30 11 38 C9 33 6 32 3 35Z"/><rect x="-8" y="34" width="16" height="5"/><rect x="-3" y="38" width="6" height="68"/><path d="M-6 60 C-4 70 4 70 6 60 L4 100 H-4Z"/></g><path d="M158 234 C166 258 188 260 200 244 C212 260 234 258 242 234" fill="none" stroke="#1c0e08" stroke-width="2.5"/><g transform="translate(288,155)" fill="#3e200e" opacity=".92"><path d="M0 0 C-7 10 -7 22 0 32 C7 22 7 10 0 0Z"/><path d="M-4 26 C-16 14 -20 30 -11 38 C-9 33 -6 32 -3 35Z"/><path d="M4 26 C16 14 20 30 11 38 C9 33 6 32 3 35Z"/><rect x="-8" y="34" width="16" height="5"/><rect x="-3" y="38" width="6" height="68"/><path d="M-6 60 C-4 70 4 70 6 60 L4 100 H-4Z"/></g><path d="M246 234 C254 258 276 260 288 244 C300 260 322 258 330 234" fill="none" stroke="#1c0e08" stroke-width="2.5"/><g transform="translate(380,155)" fill="#3e200e" opacity=".92"><path d="M0 0 C-7 10 -7 22 0 32 C7 22 7 10 0 0Z"/><path d="M-4 26 C-16 14 -20 30 -11 38 C-9 33 -6 32 -3 35Z"/><path d="M4 26 C16 14 20 30 11 38 C9 33 6 32 3 35Z"/><rect x="-8" y="34" width="16" height="5"/><rect x="-3" y="38" width="6" height="68"/><path d="M-6 60 C-4 70 4 70 6 60 L4 100 H-4Z"/></g><path d="M338 234 C346 258 368 260 380 244 C392 260 414 258 422 234" fill="none" stroke="#1c0e08" stroke-width="2.5"/><g transform="translate(472,155)" fill="#3e200e" opacity=".92"><path d="M0 0 C-7 10 -7 22 0 32 C7 22 7 10 0 0Z"/><path d="M-4 26 C-16 14 -20 30 -11 38 C-9 33 -6 32 -3 35Z"/><path d="M4 26 C16 14 20 30 11 38 C9 33 6 32 3 35Z"/><rect x="-8" y="34" width="16" height="5"/><rect x="-3" y="38" width="6" height="68"/><path d="M-6 60 C-4 70 4 70 6 60 L4 100 H-4Z"/></g><path d="M430 234 C438 258 460 260 472 244 C484 260 506 258 514 234" fill="none" stroke="#1c0e08" stroke-width="2.5"/><rect width="521" height="292" fill="#ffe8c0" opacity="0.06"/><text x="32" y="216" font-family="Liberation Sans" font-weight="bold" font-size="18" fill="#6cf6f4" stroke="#0a161e" stroke-width="2.6" paint-order="stroke" stroke-linejoin="round" textLength="456" lengthAdjust="spacingAndGlyphs">Selbst Anfänger können es mit einem Klick abschließen.</text><text x="127" y="263" font-family="Liberation Sans" font-size="18" fill="#c8b020" textLength="266" lengthAdjust="spacingAndGlyphs" filter="url(#glow)">初心者でもワンクリックで完了</text><text x="127" y="263" font-family="Liberation Sans" font-size="18" fill="#f2e030" textLength="266" lengthAdjust="spacingAndGlyphs">初心者でもワンクリックで完了</text></svg></div>
<!-- progress -->
<div class="a" style="left:615px;top:493px;width:511px;height:3px;border-radius:2px;background:#2e2e34"></div>
<div class="a" style="left:615px;top:492px;width:101px;height:4px;border-radius:2px;background:#f0f0f2"></div>
<div class="a" style="left:711px;top:489px;width:10px;height:10px;border-radius:50%;background:#1c1c21;border:2px solid #f4f4f6"></div>
<div class="a t" style="left:618px;top:507px;font-size:12px;line-height:16px;color:#f0f0f2">00:04:29 <span style="color:#8e8e94">/ 00:25:19</span></div>
<svg class="a" style="left:830px;top:505px" width="82" height="20" fill="#e8e8ea">
 <path d="M13 5.5 L7.5 10 L13 14.5Z" stroke="#e8e8ea" stroke-width="1" stroke-linejoin="round"/><rect x="14.2" y="5" width="1.6" height="10"/>
 <path d="M37.5 4.5 L45.5 10 L37.5 15.5Z" stroke="#e8e8ea" stroke-width="1.2" stroke-linejoin="round"/>
 <rect x="67" y="5" width="1.6" height="10"/><path d="M70 5.5 L75.5 10 L70 14.5Z" stroke="#e8e8ea" stroke-width="1" stroke-linejoin="round"/>
</svg>
<div class="a t" style="left:999px;top:507px;font-size:12px;line-height:16px;color:#cfcfd3">16:9</div>
<svg class="a" style="left:1026px;top:513px" width="8" height="5"><path d="M0.5 0.5 H7.5 L4 4.5Z" fill="#cfcfd3"/></svg>
<svg class="a" style="left:1046px;top:506px" width="20" height="18" fill="none" stroke="#dcdcdf" stroke-width="1.5">
 <path d="M2 6 A2 2 0 0 1 4 4 H6.5 L8 2 H12 L13.5 4 H16 A2 2 0 0 1 18 6 V14 A2 2 0 0 1 16 16 H4 A2 2 0 0 1 2 14Z"/><circle cx="10" cy="10" r="3"/>
</svg>
<div class="a" style="left:1073px;top:503px;width:25px;height:25px;border-radius:4px;background:#121216"></div>
<svg class="a" style="left:1076px;top:506px" width="20" height="20" fill="none" stroke="#b872f2" stroke-width="1.6">
 <path d="M7 2.5 V17.5 M13 2.5 V17.5 M2.5 7 H17.5 M2.5 13 H17.5"/>
</svg>
<svg class="a" style="left:1107px;top:506px" width="20" height="20" fill="none" stroke="#dcdcdf" stroke-width="1.6">
 <path d="M2.5 7 V4.5 A2 2 0 0 1 4.5 2.5 H7 M13 2.5 H15.5 A2 2 0 0 1 17.5 4.5 V7 M17.5 13 V15.5 A2 2 0 0 1 15.5 17.5 H13 M7 17.5 H4.5 A2 2 0 0 1 2.5 15.5 V13"/>
</svg>

<!-- right panel -->
<div class="a panel" style="left:1139px;top:36px;width:332px;height:493px">
  <div class="a hdr" style="left:0;top:0;width:332px;height:44px"></div>
  <div class="a" style="left:70px;top:8px;width:72px;height:36px;background:#1c1c21;border-radius:8px 8px 0 0"></div>
  <div class="a" style="left:62px;top:36px;width:8px;height:8px;background:radial-gradient(circle at 0 0,#323235 8px,#1c1c21 8px)"></div>
  <div class="a" style="left:142px;top:36px;width:8px;height:8px;background:radial-gradient(circle at 100% 0,#323235 8px,#1c1c21 8px)"></div>
  <div class="a" style="left:82px;top:42px;width:48px;height:3px;border-radius:2px;background:#b872f2"></div>
  <div class="a" style="left:290px;top:0;width:42px;height:44px;background:linear-gradient(90deg,rgba(50,50,53,0),#323235 40%,#3a3a3e)"></div>
</div>
<div class="a t" style="left:1161px;top:53px;font-size:12.5px;line-height:16px;color:#dcdcdf">字幕</div>
<div class="a t" style="left:1221px;top:53px;font-size:12.5px;line-height:16px;color:#b872f2">テキスト</div>
<div class="a t" style="left:1305px;top:53px;font-size:12.5px;line-height:16px;color:#dcdcdf">スタイル</div>
<div class="a t" style="left:1389px;top:53px;font-size:12.5px;line-height:16px;color:#dcdcdf;width:64px;overflow:hidden">アニメーション</div>
<div class="a" style="left:1430px;top:36px;width:41px;height:44px;background:linear-gradient(90deg,rgba(50,50,53,0),#323235 50%,#3a3a3e);border-top-right-radius:10px"></div>
<svg class="a" style="left:1447px;top:48px" width="16" height="20" fill="none" stroke="#f0f0f2" stroke-width="2" stroke-linecap="round"><path d="M4 2 L12 10 L4 18"/></svg>
<!-- textarea -->
<div class="a" style="left:1155px;top:96px;width:306px;height:126px;background:#000;border:1px solid #4f3a6a;border-radius:8px"></div>
<div class="a" style="left:1156px;top:188px;width:304px;height:1px;background:#2a2a2f"></div>
<div class="a t" style="left:1161px;top:103px;font-size:12px;line-height:16px;color:#a8a8ae">吹き替え音声に合わせて、自動で日本語字幕を生成。</div>
<div class="a" style="left:1161px;top:194px;width:148px;height:21px;border-radius:5px;background:#1f1f24;border:1px solid #2f2f35"></div>
<svg class="a" style="left:1164px;top:197px" width="18" height="15" fill="none" stroke="#cfcfd3" stroke-width="1.2">
 <path d="M4 13 L13 4 L15 6 L6 15Z"/><path d="M3 2 V6 M1 4 H5 M9 1 V3 M8 2 H10"/>
</svg>
<div class="a t" style="left:1181px;top:197px;font-size:12px;line-height:16px;color:#dcdcdf">AI コピーライティング</div>
<div class="a" style="left:1313px;top:194px;width:22px;height:21px;border-radius:5px;background:#1f1f24;border:1px solid #2f2f35"></div>
<svg class="a" style="left:1316px;top:198px" width="16" height="14" fill="none" stroke="#cfcfd3" stroke-width="1.3"><path d="M2 3 H14 M2 7 H13 A2 2 0 0 1 13 11 H10 M11.5 9.5 L10 11 L11.5 12.5 M2 11 H7"/></svg>
<div class="a t" style="left:1418px;top:200px;font-size:12px;line-height:16px;color:#cfcfd3">48<span style="color:#7e7e84">/300</span></div>
<!-- style -->
<div class="a t" style="left:1155px;top:237px;font-size:12px;line-height:16px;color:#cfcfd3">スタイル</div>
<svg class="a" style="left:1210px;top:243px" width="9" height="5"><path d="M0.5 0.5 H8.5 L4.5 4.5Z" fill="#aaaab0"/></svg>
<div class="a t" style="left:1412px;top:237px;font-size:12px;line-height:16px;color:#b872f2">もっと</div>
<svg class="a" style="left:1451px;top:240px" width="8" height="11" fill="none" stroke="#b872f2" stroke-width="1.6"><path d="M1.5 1.5 L6 5.5 L1.5 9.5"/></svg>
<div class="a" style="left:1155px;top:258px;width:112px;height:56px;border-radius:7px;background:#29292e"></div>
<svg class="a" style="left:1192px;top:268px" width="38" height="38" fill="none" stroke="#8e8e94" stroke-width="1.6"><circle cx="19" cy="19" r="17.5"/><path d="M7 7 L31 31"/></svg>
<div class="a" style="left:1275px;top:258px;width:112px;height:56px;border-radius:8px;background:#29292e;border:2px solid #fff"></div>
<div class="a t" style="left:1275px;top:272px;width:112px;text-align:center;font-size:23px;line-height:28px;font-weight:bold;color:#ffe81a;letter-spacing:-0.5px;transform:scaleX(0.72);text-shadow:0 0 3px #a07800,0 0 7px #7a5a00">BROWN</div>
<div class="a" style="left:1155px;top:322px;width:112px;height:20px;border-radius:7px;background:#29292e"></div>
<div class="a" style="left:1275px;top:322px;width:112px;height:20px;border-radius:7px;background:#29292e"></div>
<div class="a" style="left:1181px;top:331px;width:59px;height:1px;background:#8e8e94"></div>
<div class="a" style="left:1155px;top:332px;width:306px;height:16px;border-radius:5px;background:#26262b"></div>
<svg class="a" style="left:1303px;top:338px" width="9" height="5"><path d="M0.5 0.5 H8.5 L4.5 4.5Z" fill="#aaaab0"/></svg>
<!-- text settings -->
<div class="a t" style="left:1155px;top:364px;font-size:12px;line-height:16px;color:#dcdcdf">テキスト設定</div>
<div class="a" style="left:1155px;top:384px;width:217px;height:24px;border-radius:6px;background:#29292e"></div>
<div class="a t" style="left:1164px;top:390px;font-size:12px;line-height:16px;color:#e6e6e8">チョークS</div>
<svg class="a" style="left:1346px;top:393px" width="10" height="7" fill="none" stroke="#cfcfd3" stroke-width="1.3"><path d="M1 1 L5 5 L9 1"/></svg>
<div class="a" style="left:1377px;top:384px;width:84px;height:24px;border-radius:6px;background:#29292e"></div>
<div class="a t" style="left:1385px;top:388px;font-size:14px;line-height:16px;color:#6e6e74">−</div>
<div class="a t" style="left:1416px;top:389px;font-size:13px;line-height:16px;color:#9a9aa0">4</div>
<div class="a t" style="left:1443px;top:387px;font-size:15px;line-height:16px;color:#8a8a90">+</div>
<div class="a bt" style="left:1155px;top:412px;width:57px"></div>
<div class="a bt" style="left:1218px;top:412px;width:58px"></div>
<div class="a bt" style="left:1281px;top:412px;width:56px"></div>
<div class="a bt" style="left:1343px;top:412px;width:57px"></div>
<div class="a bt" style="left:1406px;top:412px;width:55px"></div>
<svg class="a" style="left:1155px;top:412px" width="306" height="24" fill="none" stroke="#f0f0f2" stroke-width="1.6">
 <path d="M22 5.5 H28.5 A3.2 3.2 0 0 1 28.5 12 H22 Z M22 12 H29.5 A3.5 3.5 0 0 1 29.5 19 H22 Z" stroke-width="1.5"/>
 <path d="M89 5 H97 M85 19 H93 M93 5 L89 19"/>
 <path d="M147 5 H161 M154 5 V14 M145.5 17 H162.5 M148.5 14 L145.5 17 L148.5 20 M159.5 14 L162.5 17 L159.5 20"/>
 <path d="M208.5 4 V20 M205.5 7 L208.5 4 L211.5 7 M205.5 17 L208.5 20 L211.5 17 M215 6 H222 M215 12 H221 M215 18 H222"/>
 <path d="M271 19 L275.5 6 L280 19 M272.5 15 H278.5 M282 19 L286.5 6 L291 19 M283.5 15 H289.5" stroke-width="1.5"/>
</svg>
<div class="a bt" style="left:1155px;top:440px;width:48px"></div>
<div class="a bt" style="left:1207px;top:440px;width:48px"></div>
<div class="a bt" style="left:1259px;top:440px;width:48px"></div>
<div class="a bt" style="left:1311px;top:440px;width:48px"></div>
<div class="a bt" style="left:1363px;top:440px;width:48px"></div>
<div class="a bt" style="left:1415px;top:440px;width:46px"></div>
<svg class="a" style="left:1155px;top:440px" width="306" height="24" fill="none" stroke="#f0f0f2" stroke-width="1.6">
 <path d="M15 6.5 H29 M15 12 H24 M15 17.5 H24"/>
 <path d="M67 6.5 H81 M69.5 12 H78.5 M69.5 17.5 H78.5" stroke="#b872f2"/>
 <path d="M118 6.5 H132 M123 12 H132 M123 17.5 H132"/>
 <path d="M175 5 V14 M180.5 5 V20 M186 5 V14"/>
 <path d="M227 8 V17 M232.5 4.5 V20 M238 8 V17"/>
 <path d="M279 10 V19 M284.5 4.5 V19 M290 10 V19"/>
</svg>
<div class="a" style="left:1155px;top:468px;width:306px;height:21px;border-radius:6px 6px 0 0;background:#29292e"></div>
<div class="a t" style="left:1163px;top:472px;font-size:12px;line-height:16px;color:#dcdcdf">色</div>
<div class="a" style="left:1179px;top:470px;width:20px;height:20px;border-radius:3px;background:#ffe51a;border:1px solid #fff"></div>
<svg class="a" style="left:1205px;top:473px" width="16" height="16" fill="none" stroke="#bdbdc2" stroke-width="1.2"><path d="M9 5.5 L2.5 12 L2 14.5 L4.5 14 L11 7.5"/><path d="M8 4.5 L12 8.5" stroke-width="1.6"/><path d="M10 5 L12.5 2.5 A1.5 1.5 0 0 1 14 4 L11.5 6.5Z" fill="#bdbdc2"/></svg>
<div class="a" style="left:1139px;top:489px;width:332px;height:40px;background:#212126;border-radius:0 0 10px 10px"></div>
<div class="a" style="left:1158px;top:502px;width:14px;height:14px;border-radius:3px;background:#c27cf2"></div>
<svg class="a" style="left:1158px;top:502px" width="14" height="14" fill="none" stroke="#fff" stroke-width="1.8"><path d="M3.5 7.2 L6 9.5 L10.5 4.8"/></svg>
<div class="a t" style="left:1179px;top:501px;font-size:12px;line-height:16px;color:#cfcfd3">全てに適用</div>
<div class="a" style="left:1368px;top:498px;width:95px;height:22px;border-radius:4px;border:1.5px solid #b872f2"></div>
<div class="a t" style="left:1368px;top:501px;width:95px;text-align:center;font-size:12px;line-height:16px;color:#b872f2">カスタマイズ</div>

<!-- timeline -->
<div class="a" style="left:9px;top:535px;width:1462px;height:256px;background:#15161e;border-radius:10px 10px 0 0;overflow:hidden">
  <div class="a hdr" style="left:0;top:0;width:1462px;height:33px"></div>
</div>
<div class="a" style="left:108px;top:568px;width:1px;height:222px;background:#2a2a31"></div>
<div class="a" style="left:13px;top:594px;width:92px;height:25px;border-radius:4px;background:#232329"></div>
<div class="a" style="left:13px;top:648px;width:92px;height:60px;border-radius:4px;background:#232329"></div>
<div class="a" style="left:109px;top:593px;width:1356px;height:1px;background:#0b0b0e"></div>
<div class="a" style="left:161px;top:594px;width:1304px;height:25px;background:#232328"></div>
<div class="a" style="left:161px;top:648px;width:1304px;height:60px;background:#232328"></div>
<div class="a" style="left:161px;top:594px;width:1px;height:56px;background:#3a3a42"></div>
<div class="a" style="left:1465px;top:621px;width:6px;height:169px;border-radius:3px;background:#35353f"></div>
<svg class="a" style="left:0;top:560px" width="1480" height="40" font-family="Liberation Sans" font-size="12" fill="#6e6e78" text-anchor="middle">
<text x="293" y="21">0:05</text>
<text x="425" y="21">0:10</text>
<text x="557" y="21">0:15</text>
<text x="689" y="21">0:20</text>
<text x="821" y="21">0:25</text>
<text x="953" y="21">0:30</text>
<text x="1085" y="21">0:35</text>
<text x="1217" y="21">0:40</text>
<text x="1349" y="21">0:45</text>
<g stroke="#55555e" stroke-width="1" transform="translate(0,-560)"><path d="M161.0 583 V593"/><path d="M187.4 587.5 V593"/><path d="M213.8 587.5 V593"/><path d="M240.2 587.5 V593"/><path d="M266.6 587.5 V593"/><path d="M293.0 583 V593"/><path d="M319.4 587.5 V593"/><path d="M345.8 587.5 V593"/><path d="M372.2 587.5 V593"/><path d="M398.6 587.5 V593"/><path d="M425.0 583 V593"/><path d="M451.4 587.5 V593"/><path d="M477.8 587.5 V593"/><path d="M504.2 587.5 V593"/><path d="M530.6 587.5 V593"/><path d="M557.0 583 V593"/><path d="M583.4 587.5 V593"/><path d="M609.8 587.5 V593"/><path d="M636.2 587.5 V593"/><path d="M662.6 587.5 V593"/><path d="M689.0 583 V593"/><path d="M715.4 587.5 V593"/><path d="M741.8 587.5 V593"/><path d="M768.2 587.5 V593"/><path d="M794.6 587.5 V593"/><path d="M821.0 583 V593"/><path d="M847.4 587.5 V593"/><path d="M873.8 587.5 V593"/><path d="M900.2 587.5 V593"/><path d="M926.6 587.5 V593"/><path d="M953.0 583 V593"/><path d="M979.4 587.5 V593"/><path d="M1005.8 587.5 V593"/><path d="M1032.2 587.5 V593"/><path d="M1058.6 587.5 V593"/><path d="M1085.0 583 V593"/><path d="M1111.4 587.5 V593"/><path d="M1137.8 587.5 V593"/><path d="M1164.2 587.5 V593"/><path d="M1190.6 587.5 V593"/><path d="M1217.0 583 V593"/><path d="M1243.4 587.5 V593"/><path d="M1269.8 587.5 V593"/><path d="M1296.2 587.5 V593"/><path d="M1322.6 587.5 V593"/><path d="M1349.0 583 V593"/><path d="M1375.4 587.5 V593"/><path d="M1401.8 587.5 V593"/><path d="M1428.2 587.5 V593"/><path d="M1454.6 587.5 V593"/></g>
</svg>
<!-- toolbar icons -->
<svg class="a" style="left:0;top:535px" width="1480" height="33" fill="none" stroke="#dcdcdf" stroke-width="1.6" stroke-linecap="round" stroke-linejoin="round">
 <path d="M24 10 L20 14 L24 18 M20 14 H30 A5.5 5.5 0 0 1 30 25 H23"/>
 <path d="M71 10 L75 14 L71 18 M75 14 H65 A5.5 5.5 0 0 0 65 25 H72" stroke="#55555b"/>
 <path d="M96 11.5 H112 M100.5 11.5 V9.5 A1.5 1.5 0 0 1 102 8 H106 A1.5 1.5 0 0 1 107.5 9.5 V11.5 M98 11.5 L99 24 A1.5 1.5 0 0 0 100.5 25.5 H107.5 A1.5 1.5 0 0 0 109 24 L110 11.5 M102 15 V22 M106 15 V22"/>
 <path d="M132 7 V27" stroke="#3a3a40" stroke-width="1"/>
 <circle cx="154.5" cy="22" r="3"/><circle cx="163.5" cy="22" r="3"/><path d="M156 19.5 L165 8.5 M162 19.5 L153 8.5"/>
 <path d="M222 7 V27" stroke="#3a3a40" stroke-width="1"/>
 <path d="M245.5 9 H256.5 V19 L251 24 L245.5 19Z M248.5 14 H253.5 M248.5 17 H253.5" stroke-width="1.4"/>
 <rect x="279.5" y="9" width="15" height="15" rx="3"/><path d="M284 13 H290 M287 13 V20 M285 16 L287 13 L289 16" stroke-width="1.4"/>
 <path d="M302 15 H309 L305.5 19Z" fill="#dcdcdf" stroke="none"/>
 <path d="M326 7 V27" stroke="#3a3a40" stroke-width="1"/>
 <path d="M353 8 A7.5 7 0 1 1 346.5 19 L345 23 L350 21.5" stroke-width="1.5"/><path d="M350 13 V18 M353 11 V19 M356 13 V18" stroke-width="1.5"/>
 <rect x="383.5" y="10" width="14" height="13" rx="2" stroke="#45454b"/><path d="M387 16 L390.5 13 L394 16 M390.5 13 V19 M396 22 L400 25" stroke="#45454b"/>
 <rect x="1085" y="8" width="8" height="12" rx="4"/><path d="M1081.5 15 A7.5 7.5 0 0 0 1096.5 15 M1089 22.5 V25.5"/>
 <path d="M1121 7 V27" stroke="#3a3a40" stroke-width="1"/>
 <path d="M1203 11 L1200 13 M1185 11 L1188 13 M1194 8 V11 M1194 21 V24 M1203 22 L1200 20 M1185 22 L1188 20" stroke-width="1.2"/>
 <rect x="1186" y="13" width="7" height="7" rx="2" fill="#dcdcdf" stroke="none"/><rect x="1195" y="13" width="7" height="7" rx="2" fill="#dcdcdf" stroke="none"/>
 <rect x="1269.5" y="9" width="17" height="15" rx="4"/><path d="M1272.5 16.5 H1283.5 M1275.5 13.5 L1272.5 16.5 L1275.5 19.5 M1280.5 13.5 L1283.5 16.5 L1280.5 19.5" stroke-width="1.4"/>
 <circle cx="1320" cy="16" r="7.5"/><path d="M1316.5 16 H1323.5"/>
 <circle cx="1452" cy="16" r="7.5"/><path d="M1448.5 16 H1455.5 M1452 12.5 V19.5"/>
</svg>
<div class="a" style="left:1141px;top:540px;width:22px;height:22px;border-radius:4px;background:#1a1a1f"></div>
<div class="a" style="left:1225px;top:540px;width:22px;height:22px;border-radius:4px;background:#1a1a1f"></div>
<svg class="a" style="left:1141px;top:540px" width="110" height="22" fill="none" stroke="#b872f2" stroke-width="2" stroke-linecap="round">
 <path d="M8 7.5 H5.5 A3.5 3.5 0 0 0 5.5 14.5 H8 M14 7.5 H16.5 A3.5 3.5 0 0 1 16.5 14.5 H14 M8 11 H14"/>
 <path d="M92 7 H88.5 A3.5 4 0 0 0 88.5 15 H92 M95 7 H98.5 A3.5 4 0 0 1 98.5 15 H95 M93.5 5 V17" stroke-width="1.6"/>
</svg>
<div class="a" style="left:1337px;top:549px;width:99px;height:4px;border-radius:2px;background:#222227"></div>
<div class="a" style="left:1336px;top:544px;width:13px;height:13px;border-radius:50%;background:#1c1c21;border:3px solid #f4f4f6"></div>
<div class="a t" style="left:174px;top:543px;font-size:12px;line-height:16px;color:#dcdcdf">分割</div>
<!-- track headers icons -->
<svg class="a" style="left:0;top:590px" width="108" height="160" fill="none" stroke="#bdbdc2" stroke-width="1.2" stroke-linecap="round" stroke-linejoin="round">
 <path d="M34 9 L35.5 13 L39.5 14.5 L35.5 16 L34 20 L32.5 16 L28.5 14.5 L32.5 13Z"/><path d="M38.5 8 V11 M37 9.5 H40"/><path d="M28 20 L29 19"/>
 <path d="M53 15 C56 10 62 10 65 15 C62 20 56 20 53 15Z"/><circle cx="59" cy="15" r="2"/>
 <g transform="translate(0,28)"><path d="M34 9 L35.5 13 L39.5 14.5 L35.5 16 L34 20 L32.5 16 L28.5 14.5 L32.5 13Z"/><path d="M38.5 8 V11 M37 9.5 H40"/>
 <path d="M53 15 C56 10 62 10 65 15 C62 20 56 20 53 15Z"/><circle cx="59" cy="15" r="2"/></g>
 <g transform="translate(0,73)"><rect x="28.5" y="9.5" width="9" height="11" rx="1.5"/><path d="M31 10 V20 M35 10 V20 M31 15 H35" stroke-width="1"/>
 <path d="M53 15 C56 10 62 10 65 15 C62 20 56 20 53 15Z"/><circle cx="59" cy="15" r="2"/>
 <path d="M80 12 H82 L86 9 V21 L82 18 H80Z M88.5 12 A4 4 0 0 1 88.5 18"/></g>
 <g transform="translate(0,128)"><path d="M33 20 V9 C35 10 37 11 37 13"/><circle cx="31.5" cy="19.5" r="1.8"/><path d="M28.5 8 V11 M27 9.5 H30"/>
 <path d="M54 12 H56 L60 9 V21 L56 18 H54Z M62.5 12 A4 4 0 0 1 62.5 18"/></g>
</svg>
<div class="a" style="left:115px;top:659px;width:40px;height:39px;border-radius:8px;background:#1b1b21;border:1px solid #2e2e35"></div>
<div class="a t" style="left:115px;top:671px;width:40px;text-align:center;font-size:11px;line-height:14px;color:#dcdcdf">カバー</div>
<!-- clips -->
<div class="a clip" style="left:161px;top:595px;width:108px;height:22px;background:#0b4d59"><svg class="ci" width="16" height="16" fill="none" stroke="#e4eef0" stroke-width="1.1"><path d="M1.5 14 L6 2.5 L10.5 14 M3.3 9.5 H8.7"/><path d="M12.5 1 V5 M10.5 3 H14.5 M11 1.5 L14 4.5 M14 1.5 L11 4.5" stroke-width=".8"/></svg><span class="ct">Generiert automatisch</span></div>
<div class="a clip" style="left:285px;top:595px;width:63px;height:22px;background:#0b4d59"><svg class="ci" width="16" height="16" fill="none" stroke="#e4eef0" stroke-width="1.1"><path d="M1.5 14 L6 2.5 L10.5 14 M3.3 9.5 H8.7"/><path d="M12.5 1 V5 M10.5 3 H14.5 M11 1.5 L14 4.5 M14 1.5 L11 4.5" stroke-width=".8"/></svg><span class="ct">Selbst Anfänger</span></div>
<div class="a clip" style="left:361px;top:595px;width:58px;height:22px;background:#0b4d59"><svg class="ci" width="16" height="16" fill="none" stroke="#e4eef0" stroke-width="1.1"><path d="M1.5 14 L6 2.5 L10.5 14 M3.3 9.5 H8.7"/><path d="M12.5 1 V5 M10.5 3 H14.5 M11 1.5 L14 4.5 M14 1.5 L11 4.5" stroke-width=".8"/></svg><span class="ct">Hochwertig</span></div>
<div class="a clip" style="left:449px;top:595px;width:126px;height:22px;background:#0b4d59"><svg class="ci" width="16" height="16" fill="none" stroke="#e4eef0" stroke-width="1.1"><path d="M1.5 14 L6 2.5 L10.5 14 M3.3 9.5 H8.7"/><path d="M12.5 1 V5 M10.5 3 H14.5 M11 1.5 L14 4.5 M14 1.5 L11 4.5" stroke-width=".8"/></svg><span class="ct">um Videos zu erstellen</span></div>
<div class="a clip" style="left:285px;top:623px;width:63px;height:22px;background:#12808e"><svg class="ci" width="16" height="16" fill="none" stroke="#e4eef0" stroke-width="1.1"><path d="M1.5 14 L6 2.5 L10.5 14 M3.3 9.5 H8.7"/><path d="M12.5 1 V5 M10.5 3 H14.5 M11 1.5 L14 4.5 M14 1.5 L11 4.5" stroke-width=".8"/></svg><span class="ct">初心者でも</span></div>
<div class="a clip" style="left:361px;top:623px;width:58px;height:22px;background:#12808e"><svg class="ci" width="16" height="16" fill="none" stroke="#e4eef0" stroke-width="1.1"><path d="M1.5 14 L6 2.5 L10.5 14 M3.3 9.5 H8.7"/><path d="M12.5 1 V5 M10.5 3 H14.5 M11 1.5 L14 4.5 M14 1.5 L11 4.5" stroke-width=".8"/></svg><span class="ct">高品質な</span></div>
<div class="a clip" style="left:449px;top:623px;width:126px;height:22px;background:#12808e"><svg class="ci" width="16" height="16" fill="none" stroke="#e4eef0" stroke-width="1.1"><path d="M1.5 14 L6 2.5 L10.5 14 M3.3 9.5 H8.7"/><path d="M12.5 1 V5 M10.5 3 H14.5 M11 1.5 L14 4.5 M14 1.5 L11 4.5" stroke-width=".8"/></svg><span class="ct">まるで最初から日本語</span></div>
<div class="a" style="left:161px;top:623px;width:108px;height:22px;border-radius:4px;background:#12808e;border:2px solid #fff;overflow:hidden">
 <div class="a" style="left:0;top:0;width:6px;height:18px;background:#0b3a40"></div><div class="a" style="left:2px;top:5px;width:2px;height:9px;background:#fff"></div>
 <div class="a" style="left:98px;top:0;width:6px;height:18px;background:#0b3a40"></div><div class="a" style="left:100px;top:5px;width:2px;height:9px;background:#fff"></div>
 <svg class="ci" style="left:9px;top:2px" width="16" height="16" fill="none" stroke="#e4eef0" stroke-width="1.1"><path d="M1.5 14 L6 2.5 L10.5 14 M3.3 9.5 H8.7"/><path d="M12.5 1 V5 M10.5 3 H14.5 M11 1.5 L14 4.5 M14 1.5 L11 4.5" stroke-width=".8"/></svg><span class="ct" style="left:25px;top:2px;width:72px">吹き替え音声に</span>
</div>
<div id="thumbs" class="a" style="left:161px;top:651px;width:677px;height:56px;border-radius:4px;background:#5b3c9e;overflow:hidden"><svg width="677" height="56"><defs><pattern id="tg" width="10" height="10" patternUnits="userSpaceOnUse"><rect width="10" height="10" fill="#e4d0b0"/><rect x="0" y="0" width="2" height="2" fill="#f8f0d8"/><rect x="2" y="0" width="2" height="2" fill="#e0c078"/><rect x="4" y="0" width="2" height="2" fill="#c8c0b0"/><rect x="6" y="0" width="2" height="2" fill="#f0dca8"/><rect x="8" y="0" width="2" height="2" fill="#d07858"/><rect x="0" y="2" width="2" height="2" fill="#f2e2b8"/><rect x="2" y="2" width="2" height="2" fill="#f0dca8"/><rect x="4" y="2" width="2" height="2" fill="#b86040"/><rect x="6" y="2" width="2" height="2" fill="#f8f0d8"/><rect x="8" y="2" width="2" height="2" fill="#f8f0d8"/><rect x="0" y="4" width="2" height="2" fill="#f0dca8"/><rect x="2" y="4" width="2" height="2" fill="#f0dca8"/><rect x="4" y="4" width="2" height="2" fill="#e8c880"/><rect x="6" y="4" width="2" height="2" fill="#e0c078"/><rect x="8" y="4" width="2" height="2" fill="#f8f0d8"/><rect x="0" y="6" width="2" height="2" fill="#e0c078"/><rect x="2" y="6" width="2" height="2" fill="#e8c880"/><rect x="4" y="6" width="2" height="2" fill="#f2e2b8"/><rect x="6" y="6" width="2" height="2" fill="#d07858"/><rect x="8" y="6" width="2" height="2" fill="#e0c078"/><rect x="0" y="8" width="2" height="2" fill="#f2e2b8"/><rect x="2" y="8" width="2" height="2" fill="#b86040"/><rect x="4" y="8" width="2" height="2" fill="#f2e2b8"/><rect x="6" y="8" width="2" height="2" fill="#b86040"/><rect x="8" y="8" width="2" height="2" fill="#f0dca8"/></pattern><linearGradient id="tb" x1="0" x2="1" gradientUnits="userSpaceOnUse" x2="69.4" spreadMethod="repeat"><stop offset="0" stop-color="#3a1a0a"/><stop offset=".5" stop-color="#5e3418"/><stop offset="1" stop-color="#3a1a0a"/></linearGradient></defs><rect width="677" height="56" fill="#5b3c9e"/><rect width="677" height="39" fill="#4a2412"/><rect x="-54.3" y="0" width="12" height="39" fill="#341606"/><rect x="-23.3" y="0" width="10" height="39" fill="#5a2c12"/><polygon points="-83.3,0 -71.3,0 -71.3,39 -78.3,39" fill="url(#tg)"/><polygon points="-69.3,0 -53.3,0 -60.3,39 -70.3,39" fill="url(#tg)"/><path d="M-57.3 0 L-68.3 39" stroke="#2a1206" stroke-width="1.5"/><rect x="-42.3" y="1" width="9" height="38" fill="url(#tg)"/><rect x="-32.3" y="1" width="9" height="38" fill="url(#tg)"/><rect x="15.1" y="0" width="12" height="39" fill="#341606"/><rect x="46.1" y="0" width="10" height="39" fill="#5a2c12"/><polygon points="-13.9,0 -1.9,0 -1.9,39 -8.9,39" fill="url(#tg)"/><polygon points="0.1,0 16.1,0 9.1,39 -0.9,39" fill="url(#tg)"/><path d="M12.1 0 L1.1 39" stroke="#2a1206" stroke-width="1.5"/><rect x="27.1" y="1" width="9" height="38" fill="url(#tg)"/><rect x="37.1" y="1" width="9" height="38" fill="url(#tg)"/><rect x="84.5" y="0" width="12" height="39" fill="#341606"/><rect x="115.5" y="0" width="10" height="39" fill="#5a2c12"/><polygon points="55.5,0 67.5,0 67.5,39 60.5,39" fill="url(#tg)"/><polygon points="69.5,0 85.5,0 78.5,39 68.5,39" fill="url(#tg)"/><path d="M81.5 0 L70.5 39" stroke="#2a1206" stroke-width="1.5"/><rect x="96.5" y="1" width="9" height="38" fill="url(#tg)"/><rect x="106.5" y="1" width="9" height="38" fill="url(#tg)"/><rect x="153.9" y="0" width="12" height="39" fill="#341606"/><rect x="184.9" y="0" width="10" height="39" fill="#5a2c12"/><polygon points="124.9,0 136.9,0 136.9,39 129.9,39" fill="url(#tg)"/><polygon points="138.9,0 154.9,0 147.9,39 137.9,39" fill="url(#tg)"/><path d="M150.9 0 L139.9 39" stroke="#2a1206" stroke-width="1.5"/><rect x="165.9" y="1" width="9" height="38" fill="url(#tg)"/><rect x="175.9" y="1" width="9" height="38" fill="url(#tg)"/><rect x="223.3" y="0" width="12" height="39" fill="#341606"/><rect x="254.3" y="0" width="10" height="39" fill="#5a2c12"/><polygon points="194.3,0 206.3,0 206.3,39 199.3,39" fill="url(#tg)"/><polygon points="208.3,0 224.3,0 217.3,39 207.3,39" fill="url(#tg)"/><path d="M220.3 0 L209.3 39" stroke="#2a1206" stroke-width="1.5"/><rect x="235.3" y="1" width="9" height="38" fill="url(#tg)"/><rect x="245.3" y="1" width="9" height="38" fill="url(#tg)"/><rect x="292.7" y="0" width="12" height="39" fill="#341606"/><rect x="323.7" y="0" width="10" height="39" fill="#5a2c12"/><polygon points="263.7,0 275.7,0 275.7,39 268.7,39" fill="url(#tg)"/><polygon points="277.7,0 293.7,0 286.7,39 276.7,39" fill="url(#tg)"/><path d="M289.7 0 L278.7 39" stroke="#2a1206" stroke-width="1.5"/><rect x="304.7" y="1" width="9" height="38" fill="url(#tg)"/><rect x="314.7" y="1" width="9" height="38" fill="url(#tg)"/><rect x="362.1" y="0" width="12" height="39" fill="#341606"/><rect x="393.1" y="0" width="10" height="39" fill="#5a2c12"/><polygon points="333.1,0 345.1,0 345.1,39 338.1,39" fill="url(#tg)"/><polygon points="347.1,0 363.1,0 356.1,39 346.1,39" fill="url(#tg)"/><path d="M359.1 0 L348.1 39" stroke="#2a1206" stroke-width="1.5"/><rect x="374.1" y="1" width="9" height="38" fill="url(#tg)"/><rect x="384.1" y="1" width="9" height="38" fill="url(#tg)"/><rect x="431.5" y="0" width="12" height="39" fill="#341606"/><rect x="462.5" y="0" width="10" height="39" fill="#5a2c12"/><polygon points="402.5,0 414.5,0 414.5,39 407.5,39" fill="url(#tg)"/><polygon points="416.5,0 432.5,0 425.5,39 415.5,39" fill="url(#tg)"/><path d="M428.5 0 L417.5 39" stroke="#2a1206" stroke-width="1.5"/><rect x="443.5" y="1" width="9" height="38" fill="url(#tg)"/><rect x="453.5" y="1" width="9" height="38" fill="url(#tg)"/><rect x="500.9" y="0" width="12" height="39" fill="#341606"/><rect x="531.9" y="0" width="10" height="39" fill="#5a2c12"/><polygon points="471.9,0 483.9,0 483.9,39 476.9,39" fill="url(#tg)"/><polygon points="485.9,0 501.9,0 494.9,39 484.9,39" fill="url(#tg)"/><path d="M497.9 0 L486.9 39" stroke="#2a1206" stroke-width="1.5"/><rect x="512.9" y="1" width="9" height="38" fill="url(#tg)"/><rect x="522.9" y="1" width="9" height="38" fill="url(#tg)"/><rect x="570.3" y="0" width="12" height="39" fill="#341606"/><rect x="601.3" y="0" width="10" height="39" fill="#5a2c12"/><polygon points="541.3,0 553.3,0 553.3,39 546.3,39" fill="url(#tg)"/><polygon points="555.3,0 571.3,0 564.3,39 554.3,39" fill="url(#tg)"/><path d="M567.3 0 L556.3 39" stroke="#2a1206" stroke-width="1.5"/><rect x="582.3" y="1" width="9" height="38" fill="url(#tg)"/><rect x="592.3" y="1" width="9" height="38" fill="url(#tg)"/><rect x="639.7" y="0" width="12" height="39" fill="#341606"/><rect x="670.7" y="0" width="10" height="39" fill="#5a2c12"/><polygon points="610.7,0 622.7,0 622.7,39 615.7,39" fill="url(#tg)"/><polygon points="624.7,0 640.7,0 633.7,39 623.7,39" fill="url(#tg)"/><path d="M636.7 0 L625.7 39" stroke="#2a1206" stroke-width="1.5"/><rect x="651.7" y="1" width="9" height="38" fill="url(#tg)"/><rect x="661.7" y="1" width="9" height="38" fill="url(#tg)"/><rect x="0" y="0" width="207" height="39" fill="#2a1408" opacity=".3"/><path d="M0 26 H207 M0 34 L207 33" stroke="#1e0e06" stroke-width="2.5"/><rect x="0" y="0" width="145" height="24" fill="#000" opacity=".25"/><circle cx="19" cy="14" r="7.5" fill="#fff"/><path d="M16.5 10.5 L22.5 14 L16.5 17.5Z" fill="#111"/><text x="32" y="19" font-family="Liberation Sans" font-size="12.5" fill="#f4f4f6">0:25 Pixabay_36728</text></svg></div>
<div id="audio" class="a" style="left:0;top:0"><div class="a" style="left:161px;top:712px;width:108px;height:43px;border-radius:4px;background:#5b3c9e;overflow:hidden"><svg class="a" style="left:0;top:0" width="108" height="43"><path d="M2 43 V10 H105 V43Z" fill="#ab9bd0"/><path d="M2 0 H6 V17 H2ZM16 0 H20 V13 H16ZM26 0 H28 V13 H26ZM32 0 H34 V19 H32ZM40 0 H41 V24 H40ZM47 0 H49 V19 H47ZM53 0 H55 V36 H53ZM61 0 H62 V28 H61ZM73 0 H74 V42 H73ZM80 0 H82 V28 H80ZM92 0 H94 V36 H92ZM103 0 H105 V42 H103Z" fill="#5b3c9e"/><g fill="none" stroke="#e8e0f4" stroke-width="1.1"><circle cx="11" cy="11" r="6"/><circle cx="11" cy="11" r="1.5"/><path d="M8 8 A4 4 0 0 1 14 8"/></g><text x="23" y="16" font-family="Liberation Sans" font-size="12.5" fill="#f0ecf8">1.3X</text><g fill="none" stroke="#e8e0f4" stroke-width="1.1"><rect x="55.5" y="5.5" width="11" height="11" rx="3"/><path d="M58.5 9 H63.5 M61 9 V14"/></g><text x="72" y="16" font-family="Liberation Sans" font-size="12.5" fill="#f0ecf8">0:04 G</text></svg></div><div class="a" style="left:285px;top:712px;width:63px;height:43px;border-radius:4px;background:#5b3c9e;overflow:hidden"><svg class="a" style="left:0;top:0" width="63" height="43"><path d="M2 43 V10 H60 V43Z" fill="#ab9bd0"/><path d="M2 0 H6 V17 H2ZM8 0 H10 V36 H8ZM18 0 H20 V28 H18ZM24 0 H25 V32 H24ZM35 0 H37 V32 H35ZM47 0 H49 V19 H47ZM57 0 H58 V36 H57Z" fill="#5b3c9e"/><g fill="none" stroke="#e8e0f4" stroke-width="1.1"><circle cx="11" cy="11" r="6"/><circle cx="11" cy="11" r="1.5"/><path d="M8 8 A4 4 0 0 1 14 8"/></g><text x="23" y="16" font-family="Liberation Sans" font-size="12.5" fill="#f0ecf8">1.3X</text><g fill="none" stroke="#e8e0f4" stroke-width="1.1"><rect x="55.5" y="5.5" width="11" height="11" rx="3"/><path d="M58.5 9 H63.5 M61 9 V14"/></g></svg></div><div class="a" style="left:361px;top:712px;width:58px;height:43px;border-radius:4px;background:#5b3c9e;overflow:hidden"><svg class="a" style="left:0;top:0" width="58" height="43"><path d="M2 43 V10 H55 V43Z" fill="#ab9bd0"/><path d="M2 0 H6 V17 H2ZM10 0 H12 V32 H10ZM20 0 H21 V28 H20ZM29 0 H32 V15 H29ZM36 0 H38 V42 H36ZM42 0 H44 V32 H42Z" fill="#5b3c9e"/><g fill="none" stroke="#e8e0f4" stroke-width="1.1"><circle cx="11" cy="11" r="6"/><circle cx="11" cy="11" r="1.5"/><path d="M8 8 A4 4 0 0 1 14 8"/></g><text x="23" y="16" font-family="Liberation Sans" font-size="12.5" fill="#f0ecf8">1.3X</text><text x="72" y="16" font-family="Liberation Sans" font-size="12.5" fill="#f0ecf8">i</text></svg></div><div class="a" style="left:449px;top:712px;width:126px;height:43px;border-radius:4px;background:#5b3c9e;overflow:hidden"><svg class="a" style="left:0;top:0" width="126" height="43"><path d="M2 43 V10 H123 V43Z" fill="#ab9bd0"/><path d="M2 0 H4 V32 H2ZM14 0 H15 V24 H14ZM25 0 H27 V42 H25ZM38 0 H40 V13 H38ZM46 0 H48 V32 H46ZM54 0 H56 V42 H54ZM62 0 H65 V13 H62ZM67 0 H69 V13 H67ZM73 0 H75 V42 H73ZM91 0 H93 V36 H91ZM99 0 H101 V28 H99ZM113 0 H115 V42 H113Z" fill="#5b3c9e"/><g fill="none" stroke="#e8e0f4" stroke-width="1.1"><circle cx="11" cy="11" r="6"/><circle cx="11" cy="11" r="1.5"/><path d="M8 8 A4 4 0 0 1 14 8"/></g><text x="23" y="16" font-family="Liberation Sans" font-size="12.5" fill="#f0ecf8">1.1X</text><g fill="none" stroke="#e8e0f4" stroke-width="1.1"><rect x="55.5" y="5.5" width="11" height="11" rx="3"/><path d="M58.5 9 H63.5 M61 9 V14"/></g><text x="72" y="16" font-family="Liberation Sans" font-size="12.5" fill="#f0ecf8">0:04 um V</text></svg></div></div>
<!-- playhead -->
<div class="a" style="left:291.5px;top:578px;width:1.5px;height:212px;background:#f4f4f6"></div>
<svg class="a" style="left:285px;top:569px" width="14" height="16"><path d="M2 1 H12 A1.5 1.5 0 0 1 13.5 2.5 V10 L7 15 L0.5 10 V2.5 A1.5 1.5 0 0 1 2 1Z" fill="#f4f4f6"/></svg>
<div class="a" style="left:282px;top:728px;width:21px;height:34px;border-radius:11px;background:#f4f4f6"></div>
<svg class="a" style="left:282px;top:728px" width="21" height="34" fill="none" stroke="#3a3a40" stroke-width="1.3">
 <path d="M10.5 4 V8 M10.5 10 V13" stroke-dasharray="2 1.5"/><circle cx="6" cy="27" r="2.8"/><circle cx="15" cy="27" r="2.8"/><path d="M7.5 24.5 L14.5 14 M13.5 24.5 L6.5 14"/>
</svg>

<div class="a" style="left:0;top:0;z-index:10">
<!-- popup -->
<div class="a" style="left:167px;top:195px;width:420px;height:352px;background:#39393e;border:1px solid #56565b;z-index:0"></div>
<div class="a" style="left:173px;top:201px;width:407px;height:32px;background:#000;border:1.5px solid #b56ff0;border-radius:7px"></div>
<svg class="a" style="left:183px;top:207px" width="22" height="22" fill="none" stroke="#bdbdc2" stroke-width="1.3"><circle cx="10" cy="10" r="7.5"/><path d="M15.5 15.5 L20 20"/><path d="M6.5 7.5 A4.5 4 0 0 1 13 7" stroke-width="1"/></svg>
<div class="a" style="left:212px;top:209px;width:1px;height:15px;background:#d0d0d4"></div>
<div class="a t" style="left:214px;top:209px;font-size:12px;color:#86868c;line-height:16px">検索</div>
<div class="a" style="left:298px;top:426px;width:138px;height:34px;border:2px solid #f5b316;border-radius:3px"></div>
<div class="a" style="left:306px;top:430px;width:126px;height:26px;background:#4a494f;border-radius:5px"></div>
<div class="a t lg" style="left:179px;top:240px;color:#dcdcdf">マケドニア語</div>
<div class="a t lg" style="left:311px;top:240px;color:#dcdcdf">マダガスカル語</div>
<div class="a t lg" style="left:443px;top:240px;color:#dcdcdf">マヤ語</div>
<div class="a t lg" style="left:179px;top:268px;color:#dcdcdf">マラーティー語</div>
<div class="a t lg" style="left:311px;top:268px;color:#dcdcdf">マラヤーラム語</div>
<div class="a t lg" style="left:443px;top:268px;color:#dcdcdf">マルタ語</div>
<div class="a t lg" style="left:179px;top:296px;color:#dcdcdf">マレー語</div>
<div class="a t lg" style="left:311px;top:296px;color:#dcdcdf">マレー語（インドネ...</div>
<div class="a t lg" style="left:443px;top:296px;color:#dcdcdf">マレー語（シンガポ...</div>
<div class="a t lg" style="left:179px;top:324px;color:#dcdcdf">マレー語（ブルネイ）</div>
<div class="a t lg" style="left:311px;top:324px;color:#dcdcdf">モンゴル語</div>
<div class="a t lg" style="left:443px;top:324px;color:#dcdcdf">ヨルバ語</div>
<div class="a t lg" style="left:179px;top:352px;color:#dcdcdf">ラオ語</div>
<div class="a t lg" style="left:311px;top:352px;color:#dcdcdf">ラトビア語</div>
<div class="a t lg" style="left:443px;top:352px;color:#dcdcdf">リトアニア語</div>
<div class="a t lg" style="left:179px;top:380px;color:#dcdcdf">ルーマニア語</div>
<div class="a t lg" style="left:311px;top:380px;color:#dcdcdf">ロシア語</div>
<div class="a t lg" style="left:443px;top:380px;color:#dcdcdf">ロシア語（ウクライ...</div>
<div class="a t lg" style="left:179px;top:408px;color:#dcdcdf">ロシア語（カザフス...</div>
<div class="a t lg" style="left:311px;top:408px;color:#dcdcdf">ロシア語（ベラルー...</div>
<div class="a t lg" style="left:443px;top:408px;color:#dcdcdf">広東語</div>
<div class="a t lg" style="left:179px;top:436px;color:#dcdcdf">韓国語</div>
<div class="a t lg" style="left:311px;top:436px;color:#b872f2">日本語</div>
<div class="a t lg" style="left:443px;top:436px;color:#dcdcdf">英語</div>
<div class="a t lg" style="left:179px;top:464px;color:#dcdcdf">英語（アメリカ）</div>
<div class="a t lg" style="left:311px;top:464px;color:#dcdcdf">英語（イギリス）</div>
<div class="a t lg" style="left:443px;top:464px;color:#dcdcdf">英語（インド）</div>
<div class="a t lg" style="left:179px;top:492px;color:#dcdcdf">英語（オーストラリ...</div>
<div class="a t lg" style="left:311px;top:492px;color:#dcdcdf">英語（カナダ）</div>
<div class="a t lg" style="left:443px;top:492px;color:#dcdcdf">中国語 (繁体字)</div>
<div class="a t lg" style="left:179px;top:520px;color:#dcdcdf">中国語 (簡体字)</div>
<div class="a t lg" style="left:311px;top:520px;color:#dcdcdf">中国語（方言）</div>
<div class="a" style="left:573px;top:469px;width:5px;height:70px;border-radius:3px;background:#c6c6ca"></div>

</div>
</body></html>
